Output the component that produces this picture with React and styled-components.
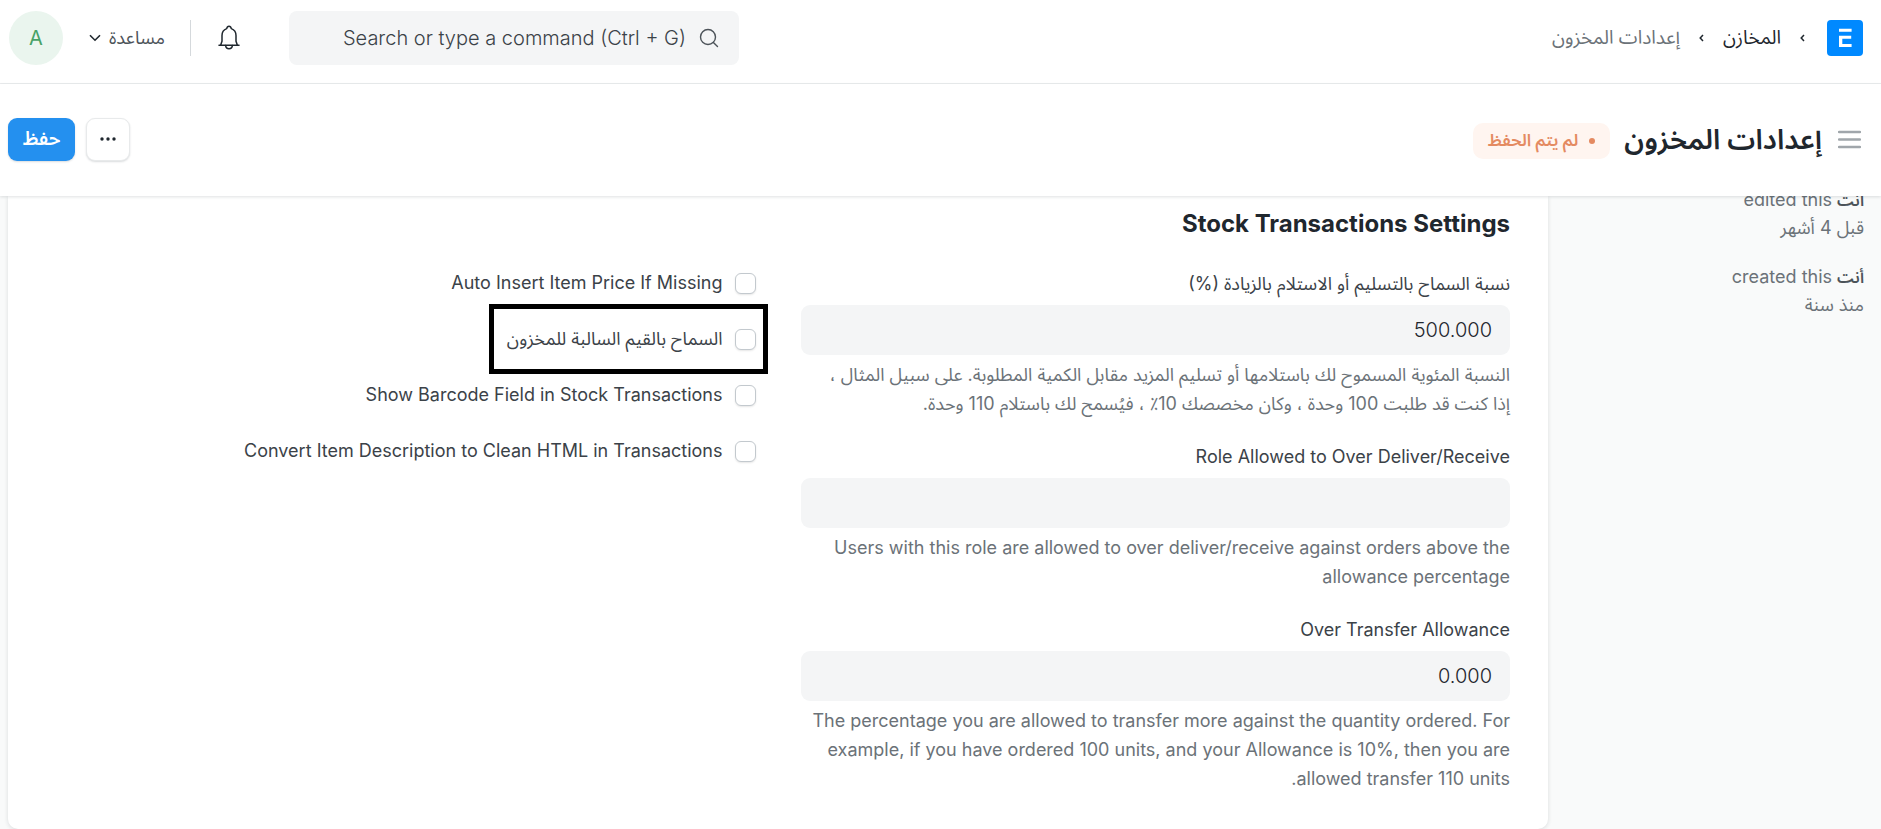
import React, { useState } from "react";
import styled, { createGlobalStyle } from "styled-components";

const GlobalStyle = createGlobalStyle`
  * {
    box-sizing: border-box;
  }
  body {
    margin: 0;
    background: #f9fafa;
    color: #1f272e;
    font-family: Inter, "Noto Sans Arabic", "DejaVu Sans", sans-serif;
    font-size: 18px;
  }
  button,
  input {
    font: inherit;
    color: inherit;
  }
`;

const PageStyled = styled.div`
  min-height: 100vh;
  display: flex;
  flex-direction: column;
`;
const NavbarStyled = styled.header`
  display: flex;
  align-items: center;
  justify-content: space-between;
  height: 84px;
  padding: 0 18px 7px 9px;
  background: #fff;
  border-bottom: 1px solid #ebedee;
`;
const NavGroup = styled.div`
  display: flex;
  align-items: center;
`;
const BreadcrumbStyled = styled.nav`
  display: flex;
  align-items: center;
  gap: 19px;
  margin-right: 22px;
`;
const CrumbLink = styled.a`
  font-size: 19px;
  line-height: 24px;
  text-decoration: none;
  color: ${({ $current }) => ($current ? "#6b7278" : "#1f272e")};
`;
const SearchStyled = styled.label`
  display: flex;
  align-items: center;
  gap: 11px;
  width: 450px;
  height: 54px;
  padding: 0 20px;
  border-radius: 8px;
  background: #f4f5f6;
  color: #4c5359;
  input {
    flex: 1;
    min-width: 0;
    border: 0;
    outline: 0;
    background: transparent;
    font-size: 20px;
    font-weight: 300;
    text-align: right;
  }
  input::placeholder {
    color: #3b4248;
    opacity: 1;
  }
`;
const IconButton = styled.button`
  display: flex;
  align-items: center;
  padding: 0;
  border: 0;
  background: none;
  color: #1f272e;
  cursor: pointer;
`;
const BellButton = styled(IconButton)`
  margin-right: 49px;
`;
const Divider = styled.div`
  width: 1px;
  height: 36px;
  margin: 0 27px 0 25px;
  background: #d5d9dc;
`;
const HelpButton = styled(IconButton)`
  gap: 8px;
  font-size: 18px;
  color: #4c5359;
`;
const Avatar = styled.button`
  width: 54px;
  height: 54px;
  margin-right: 26px;
  padding: 0;
  border: 0;
  border-radius: 50%;
  background: #eaf5ee;
  color: #48a267;
  font-size: 20px;
`;
const PageHeadStyled = styled.div`
  position: relative;
  display: flex;
  align-items: center;
  justify-content: space-between;
  height: 112px;
  padding: 0 20px 2px 8px;
  background: #fff;
  box-shadow: 0 1px 3px rgba(25, 39, 52, 0.14);
`;
const Title = styled.h1`
  margin: 0 16px 0 14px;
  font-size: 28px;
  line-height: 36px;
  font-weight: 600;
`;
const Indicator = styled.span`
  display: flex;
  align-items: center;
  gap: 11px;
  height: 36px;
  margin-top: 3px;
  padding: 0 15px;
  border-radius: 10px;
  background: #fff5f0;
  color: #e48a61;
  font-size: 17px;
  font-weight: 600;
  &::before {
    content: "";
    width: 6px;
    height: 6px;
    border-radius: 50%;
    background: currentColor;
  }
`;
const ActionButton = styled.button`
  display: flex;
  align-items: center;
  justify-content: center;
  width: ${({ $primary }) => ($primary ? "67px" : "44px")};
  height: 43px;
  padding: 0;
  border: ${({ $primary }) => ($primary ? "0" : "1px solid #e8eaeb")};
  border-radius: 9px;
  background: ${({ $primary }) => ($primary ? "#2490ef" : "#fff")};
  color: ${({ $primary }) => ($primary ? "#fff" : "#1f272e")};
  font-size: 19px;
  font-weight: 600;
  box-shadow: 0 1px 2px rgba(25, 39, 52, 0.16);
`;
const Actions = styled.div`
  display: flex;
  gap: 11px;
`;
const BodyStyled = styled.div`
  flex: 1;
  display: flex;
  overflow: hidden;
  padding-left: 8px;
`;
const SidebarStyled = styled.aside`
  flex: 0 0 333px;
  padding-right: 17px;
  color: #6b7278;
`;
const Timeline = styled.ul`
  display: flex;
  flex-direction: column;
  gap: 22px;
  margin: -10px 0 0;
  padding: 0;
  list-style: none;
  line-height: 27px;
  b {
    font-size: 16px;
    font-weight: 600;
    color: #4c5359;
  }
`;
const CardStyled = styled.main`
  flex: 1;
  padding: 14px 38px 34px;
  border-radius: 0 0 10px 10px;
  background: #fff;
  box-shadow: 0 1px 4px rgba(25, 39, 52, 0.14);
`;
const SectionTitle = styled.h2`
  margin: 0 0 34px;
  font-size: 24px;
  line-height: 28px;
  font-weight: 700;
`;
const Columns = styled.div`
  display: grid;
  grid-template-columns: 1fr 1fr;
  gap: 45px;
`;
const FieldList = styled.div`
  display: flex;
  flex-direction: column;
  gap: 27px;
`;
const FieldStyled = styled.div`
  label {
    display: block;
    margin-bottom: 9px;
    line-height: 24px;
    color: #3b4248;
  }
  input {
    display: block;
    width: 100%;
    height: 50px;
    padding: 0 18px;
    border: 0;
    border-radius: 9px;
    background: #f4f5f6;
    font-size: 20px;
    font-weight: 300;
  }
  p {
    margin: 5px 0 0;
    line-height: 29px;
    color: #6b7278;
  }
`;
const CheckList = styled.div`
  display: flex;
  flex-direction: column;
  align-items: flex-start;
  gap: 34px;
`;
const CheckLabel = styled.label`
  position: relative;
  display: flex;
  align-items: center;
  gap: 12px;
  line-height: 22px;
  color: #3b4248;
  input {
    appearance: none;
    width: 21px;
    height: 21px;
    margin: 0;
    border: 1px solid #c3c9ce;
    border-radius: 6px;
    background: #fff;
    box-shadow: 0 1px 2px rgba(0, 0, 0, 0.1);
  }
  input:checked {
    background: #2490ef;
  }
`;
const Highlight = styled.span`
  position: absolute;
  inset: -24px -12px -24px -18px;
  border: 5px solid #000;
  pointer-events: none;
`;

const FIELDS = [
  {
    id: "over_delivery",
    label: "نسبة السماح بالتسليم أو الاستلام بالزيادة (%)",
    value: "500.000",
    help: "النسبة المئوية المسموح لك باستلامها أو تسليم المزيد مقابل الكمية المطلوبة. على سبيل المثال ، إذا\u00a0كنت قد طلبت 100 وحدة ، وكان مخصصك 10٪ ، فيُسمح لك باستلام 110 وحدة.",
  },
  {
    id: "role_allowed",
    label: "Role Allowed to Over Deliver/Receive",
    value: "",
    help: "Users with this role are allowed to over deliver/receive against orders above the allowance percentage",
  },
  {
    id: "over_transfer",
    label: "Over Transfer Allowance",
    value: "0.000",
    help: "The percentage you are allowed to transfer more against the quantity ordered. For example, if you have ordered 100 units, and your Allowance is 10%, then you are allowed transfer 110 units.",
  },
];

const CHECKS = [
  { id: "auto_insert", label: "Auto Insert Item Price If Missing" },
  {
    id: "allow_negative",
    label: "السماح بالقيم السالبة للمخزون",
    highlight: true,
  },
  { id: "show_barcode", label: "Show Barcode Field in Stock Transactions" },
  {
    id: "clean_html",
    label: "Convert Item Description to Clean HTML in Transactions",
  },
];

const Logo = () => (
  <svg width="36" height="36" viewBox="0 0 36 36">
    <rect width="36" height="36" rx="4" fill="#0089ff" />
    <path
      d="M12 8.8h12.6v2.9H12zM12 15.8h12.2v2.9h-8.9v5.2h9.3v3H12z"
      fill="#fff"
    />
  </svg>
);
const Chevron = () => (
  <svg width="5" height="8" viewBox="0 0 5 8" fill="none">
    <path d="M4 1L1.2 4L4 7" stroke="#1f272e" strokeWidth="1.5" />
  </svg>
);
const SearchIcon = () => (
  <svg
    width="20"
    height="20"
    viewBox="0 0 20 20"
    fill="none"
    stroke="currentColor"
    strokeWidth="1.4"
    strokeLinecap="round"
  >
    <circle cx="9" cy="9" r="7.5" />
    <path d="M14.4 14.4L18.5 18.5" />
  </svg>
);
const BellIcon = () => (
  <svg
    width="22"
    height="26"
    viewBox="0 0 22 26"
    fill="none"
    stroke="currentColor"
    strokeWidth="1.5"
    strokeLinejoin="round"
    strokeLinecap="round"
  >
    <path d="M1 20.2h20M2.6 20.2L4 16.2V10.5C4 7 5.9 4.6 8.7 3.6C9 2 9.8 1.2 11 1.2S13 2 13.3 3.6C16.1 4.6 18 7 18 10.5V16.2L19.4 20.2" />
    <path d="M7.6 20.4C7.8 22.7 9.1 23.8 11 23.8S14.2 22.7 14.4 20.4" />
  </svg>
);

const Field = ({ field }) => {
  const [value, setValue] = useState(field.value);
  return (
    <FieldStyled>
      <label htmlFor={field.id}>{field.label}</label>
      <input
        id={field.id}
        type="text"
        value={value}
        onChange={(e) => setValue(e.target.value)}
      />
      <p>{field.help}</p>
    </FieldStyled>
  );
};

const Navbar = () => (
  <NavbarStyled>
    <NavGroup>
      <Logo />
      <BreadcrumbStyled>
        <Chevron />
        <CrumbLink href="#stock">المخازن</CrumbLink>
        <Chevron />
        <CrumbLink href="#stock-settings" $current>
          إعدادات المخزون
        </CrumbLink>
      </BreadcrumbStyled>
    </NavGroup>
    <NavGroup>
      <SearchStyled>
        <SearchIcon />
        <input
          type="text"
          dir="ltr"
          aria-label="Search"
          placeholder="Search or type a command (Ctrl + G)"
        />
      </SearchStyled>
      <BellButton aria-label="Notifications">
        <BellIcon />
      </BellButton>
      <Divider />
      <HelpButton>
        مساعدة
        <svg width="12" height="8" viewBox="0 0 12 8" fill="none">
          <path d="M1 1.2L6 6.2L11 1.2" stroke="#1f272e" strokeWidth="1.6" />
        </svg>
      </HelpButton>
      <Avatar>A</Avatar>
    </NavGroup>
  </NavbarStyled>
);

const PageHead = () => (
  <PageHeadStyled>
    <NavGroup>
      <IconButton aria-label="Toggle sidebar">
        <svg width="23" height="19" viewBox="0 0 23 19">
          <path
            d="M1 2h21M1 9.5h21M1 17h21"
            stroke="#a0a6ab"
            strokeWidth="2.4"
            strokeLinecap="round"
          />
        </svg>
      </IconButton>
      <Title>إعدادات المخزون</Title>
      <Indicator>لم يتم الحفظ</Indicator>
    </NavGroup>
    <Actions>
      <ActionButton aria-label="Menu">
        <svg width="16" height="4" viewBox="0 0 16 4" fill="currentColor">
          <circle cx="2" cy="2" r="1.7" />
          <circle cx="8" cy="2" r="1.7" />
          <circle cx="14" cy="2" r="1.7" />
        </svg>
      </ActionButton>
      <ActionButton $primary>حفظ</ActionButton>
    </Actions>
  </PageHeadStyled>
);

const App = () => {
  return (
    <PageStyled dir="rtl" lang="ar">
      <GlobalStyle />
      <Navbar />
      <PageHead />
      <BodyStyled>
        <SidebarStyled>
          <Timeline>
            <li>
              <b>أنت</b> edited this
              <div>قبل 4 أشهر</div>
            </li>
            <li>
              <b>أنت</b> created this
              <div>منذ سنة</div>
            </li>
          </Timeline>
        </SidebarStyled>
        <CardStyled>
          <SectionTitle>Stock Transactions Settings</SectionTitle>
          <Columns>
            <FieldList>
              {FIELDS.map((field) => (
                <Field key={field.id} field={field} />
              ))}
            </FieldList>
            <CheckList>
              {CHECKS.map((check) => (
                <CheckLabel key={check.id}>
                  <input type="checkbox" name={check.id} />
                  {check.label}
                  {check.highlight && <Highlight />}
                </CheckLabel>
              ))}
            </CheckList>
          </Columns>
        </CardStyled>
      </BodyStyled>
    </PageStyled>
  );
};

export default App;
